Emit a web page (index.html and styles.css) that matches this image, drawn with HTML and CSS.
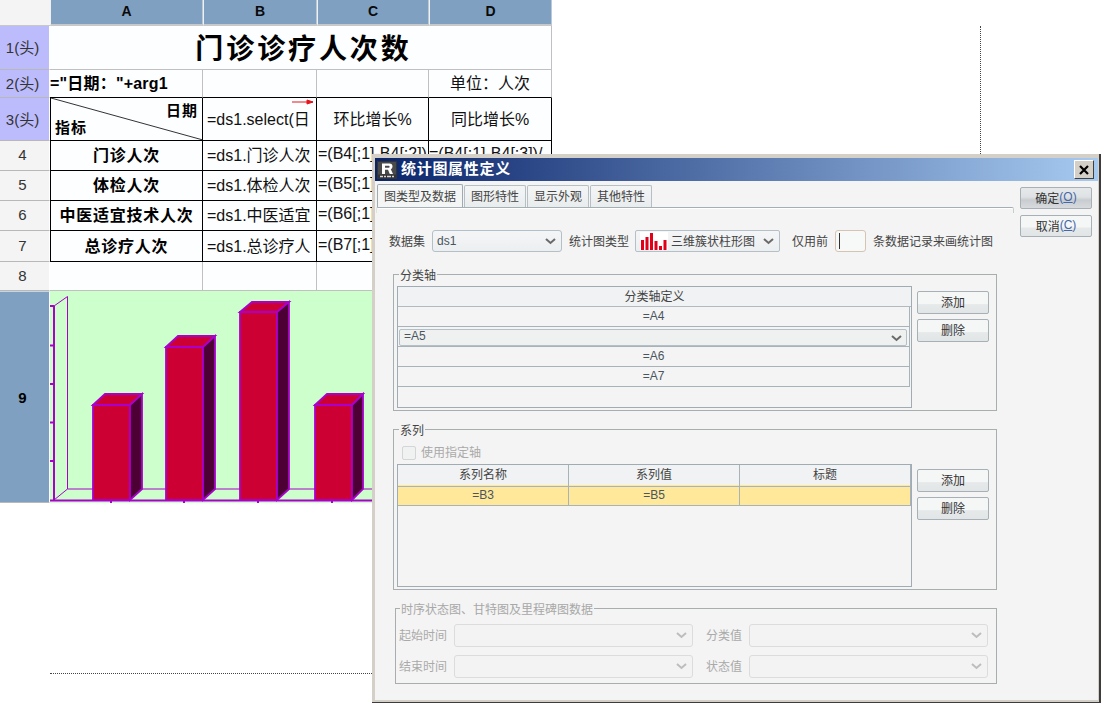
FILE: index.html
```html
<!DOCTYPE html>
<html lang="zh">
<head>
<meta charset="utf-8">
<title>统计图属性定义</title>
<link rel="stylesheet" href="styles.css">
</head>
<body>
<main class="sheet">
  <div class="corner"></div>
  <div class="col-h">A</div><div class="col-h">B</div><div class="col-h">C</div><div class="col-h">D</div>

  <div class="row-h head">1(头)</div>
  <div class="cell title">门诊诊疗人次数</div>

  <div class="row-h head">2(头)</div>
  <div class="cell gray-b black-under date-arg">="日期："+arg1</div>
  <div class="cell gray-b black-under"></div>
  <div class="cell gray-b black-under"></div>
  <div class="cell gray-b black-under center">单位：人次</div>

  <div class="row-h head">3(头)</div>
  <div class="cell black first diag">
    <svg class="diag-line" width="153" height="43" viewBox="0 0 153 43"><line x1="0" y1="0" x2="152" y2="42"></line></svg>
    <span class="diag-top">日期</span>
    <span class="diag-bottom">指标</span>
  </div>
  <div class="cell black pad arrow-cell">=ds1.select(日
    <svg class="expand-arrow" width="22" height="6" viewBox="0 0 22 6"><path d="M0 3H21"></path><path class="fill" d="M15 1L21 3L15 5Z"></path></svg>
  </div>
  <div class="cell black center">环比增长%</div>
  <div class="cell black center">同比增长%</div>

  <div class="row-h">4</div>
  <div class="cell black first center strong">门诊人次</div>
  <div class="cell black pad">=ds1.门诊人次</div>
  <div class="cell black formula">=(B4[;1]-B4[;2])</div>
  <div class="cell black">=(B4[;1]-B4[;3])/</div>

  <div class="row-h">5</div>
  <div class="cell black first center strong">体检人次</div>
  <div class="cell black pad">=ds1.体检人次</div>
  <div class="cell black formula">=(B5[;1]</div>
  <div class="cell black"></div>

  <div class="row-h">6</div>
  <div class="cell black first center strong">中医适宜技术人次</div>
  <div class="cell black pad">=ds1.中医适宜</div>
  <div class="cell black formula">=(B6[;1]</div>
  <div class="cell black"></div>

  <div class="row-h">7</div>
  <div class="cell black first center strong">总诊疗人次</div>
  <div class="cell black pad">=ds1.总诊疗人</div>
  <div class="cell black formula">=(B7[;1]</div>
  <div class="cell black"></div>

  <div class="row-h">8</div>
  <div class="cell gray-b"></div><div class="cell gray-b"></div><div class="cell gray-b"></div><div class="cell gray-b"></div>

  <div class="row-h nine">9</div>
  <div class="chart-cell">
    <svg class="chart" width="502" height="212" viewBox="0 0 502 212">
      <g class="ax-thin">
        <path d="M4 15L17.500 5.500V198H322"></path>
        <path d="M4 209L17.500 198"></path>
      </g>
      <g class="ax-thick">
        <path d="M4 15V209"></path>
        <path d="M0 209.500H322"></path>
        <path d="M0 15H4M0 54.500H4M0 93H4M0 131.500H4M0 170H4"></path>
      </g>
      <g class="ax-tick"><path d="M61 210V212M134 210V212M208 210V212M282 210V212"></path></g>
      <g class="bar">
        <rect class="front" x="43" y="114" width="37" height="95"></rect>
        <path class="top" d="M43 114L55 103H92L80 114Z"></path>
        <path class="side" d="M80 114L92 103V198L80 209Z"></path>
      </g>
      <g class="bar">
        <rect class="front" x="116" y="56" width="37" height="153"></rect>
        <path class="top" d="M116 56L128 45H165L153 56Z"></path>
        <path class="side" d="M153 56L165 45V198L153 209Z"></path>
      </g>
      <g class="bar">
        <rect class="front" x="190" y="21" width="37" height="188"></rect>
        <path class="top" d="M190 21L202 11H239L227 21Z"></path>
        <path class="side" d="M227 21L239 11V198L227 209Z"></path>
      </g>
      <g class="bar">
        <rect class="front" x="265" y="114" width="37" height="95"></rect>
        <path class="top" d="M265 114L277 103H313L302 114Z"></path>
        <path class="side" d="M302 114L313 103V198L302 209Z"></path>
      </g>
    </svg>
  </div>
</main>

<div class="page-line-v"></div>
<div class="page-line-h"></div>

<section class="dialog">
  <div class="frame">
    <header class="titlebar">
      <svg class="logo" width="20" height="18" viewBox="0 0 20 18">
        <rect width="20" height="18" fill="#333"></rect>
        <rect x="1" y="1" width="18" height="12.500" fill="#4a4a4a"></rect>
        <path class="logo-r" d="M5 2.500H12.500Q15.500 2.500 15.500 5.500Q15.500 7.500 13.800 8.200L16 13H12.800L11 8.800H8V13H5ZM8 4.700V6.800H11.800Q12.600 6.800 12.600 5.700Q12.600 4.700 11.800 4.700Z"></path>
        <path class="logo-s" d="M3 15.500H6M7 15.500H9M10 15.500H14M15 15.500H17"></path>
      </svg>
      <h1 class="dialog-title">统计图属性定义</h1>
      <button class="close" type="button">
        <svg width="12" height="12" viewBox="0 0 12 12"><path d="M2 2L10 10M10 2L2 10"></path></svg>
      </button>
    </header>
    <div class="dialog-body">
      <div class="main-col">
        <nav class="tabs">
          <span class="tab active">图类型及数据</span>
          <span class="tab">图形特性</span>
          <span class="tab">显示外观</span>
          <span class="tab">其他特性</span>
        </nav>
        <div class="tab-rule"></div>

        <div class="form-row">
          <label class="lbl-ds">数据集</label>
          <div class="sel sel-ds"><span>ds1</span><svg class="chev" width="11" height="7" viewBox="0 0 11 7"><path d="M1 1L5.500 5L10 1"></path></svg></div>
          <label class="lbl-type">统计图类型</label>
          <div class="sel sel-type">
            <svg class="mini-chart" width="28" height="18" viewBox="0 0 28 18">
              <rect width="28" height="18" fill="#fff"></rect>
              <path fill="#e0001a" d="M1 8h3v10H1zM5.500 5h3v13h-3zM10 1h3v17h-3zM14.500 9h3v9h-3zM19 14h3v4h-3zM23.500 8h3v10h-3z"></path>
            </svg>
            <span class="type-name">三维簇状柱形图</span>
            <svg class="chev" width="11" height="7" viewBox="0 0 11 7"><path d="M1 1L5.500 5L10 1"></path></svg>
          </div>
          <label class="lbl-only">仅用前</label>
          <div class="num-input"><i class="caret"></i></div>
          <label class="lbl-rest">条数据记录来画统计图</label>
        </div>

        <div class="group group-cat">
          <span class="legend">分类轴</span>
          <div class="group-flex">
            <div class="tbl tbl-cat">
              <div class="t-head">分类轴定义</div>
              <div class="t-row">=A4</div>
              <div class="t-edit"><div class="t-edit-box"><span>=A5</span><svg class="chev" width="11" height="7" viewBox="0 0 11 7"><path d="M1 1L5.500 5L10 1"></path></svg></div></div>
              <div class="t-row">=A6</div>
              <div class="t-row">=A7</div>
            </div>
            <div class="side-btns">
              <button class="btn" type="button">添加</button>
              <button class="btn" type="button">删除</button>
            </div>
          </div>
        </div>

        <div class="group group-series">
          <span class="legend">系列</span>
          <div class="check-row"><i class="check"></i><span>使用指定轴</span></div>
          <div class="group-flex">
            <div class="tbl tbl-series">
              <div class="t3 t3-head"><span>系列名称</span><span>系列值</span><span>标题</span></div>
              <div class="t3 t3-sel"><span>=B3</span><span>=B5</span><span></span></div>
            </div>
            <div class="side-btns">
              <button class="btn" type="button">添加</button>
              <button class="btn" type="button">删除</button>
            </div>
          </div>
        </div>

        <div class="group group-time">
          <span class="legend legend-off">时序状态图、甘特图及里程碑图数据</span>
          <div class="time-grid">
            <span class="t-lbl">起始时间</span>
            <div class="sel sel-off"><svg class="chev" width="11" height="7" viewBox="0 0 11 7"><path d="M1 1L5.500 5L10 1"></path></svg></div>
            <span class="t-lbl">分类值</span>
            <div class="sel sel-off"><svg class="chev" width="11" height="7" viewBox="0 0 11 7"><path d="M1 1L5.500 5L10 1"></path></svg></div>
            <span class="t-lbl">结束时间</span>
            <div class="sel sel-off"><svg class="chev" width="11" height="7" viewBox="0 0 11 7"><path d="M1 1L5.500 5L10 1"></path></svg></div>
            <span class="t-lbl">状态值</span>
            <div class="sel sel-off"><svg class="chev" width="11" height="7" viewBox="0 0 11 7"><path d="M1 1L5.500 5L10 1"></path></svg></div>
          </div>
        </div>
      </div>
      <aside class="action-col">
        <button class="btn btn-act btn-default" type="button">确定<span class="key">(<u>O</u>)</span></button>
        <button class="btn btn-act" type="button">取消<span class="key">(<u>C</u>)</span></button>
      </aside>
    </div>
  </div>
</section>
</body>
</html>
```
FILE: styles.css
```css
* { box-sizing: border-box; }
html, body { margin: 0; height: 100%; background: #fff; overflow: hidden; }
body {
  position: relative;
  width: 1109px;
  height: 713px;
  font-family: "Liberation Sans", "Noto Sans CJK SC", sans-serif;
  color: #111;
}

/* Spreadsheet */
.sheet {
  display: grid;
  width: 552px;
  grid-template-columns: 50px 153px 114px 112px 123px;
  grid-template-rows: 26px 44px 28px 43px 30px 30px 30px 31px 29px 212px;
  font-size: 16px;
}
.corner { background: #f4f4f4; border-bottom: 1px solid #c8c8c8; }
.col-h {
  display: flex; align-items: center; justify-content: center;
  background: #7fa0c0;
  border-right: 1px solid #b9c9d9;
  border-bottom: 2px solid #c8c8c8;
  border-left: 1px solid #f0f0f0;
  padding-bottom: 3px;
  font-size: 14px; font-weight: bold; color: #0a0a0a;
}
.row-h {
  display: flex; align-items: center; justify-content: center;
  background: #f4f4f4;
  border-bottom: 1px solid #b8b8b8;
  border-right: 1px solid #fff;
  font-size: 15px; color: #333;
  padding: 0 4px 2px 0;
}
.row-h.head { background: #bcbcfc; }
.row-h.nine {
  background: #7fa0c0;
  border-top: 1px solid #c8d4e0;
  color: #000; font-weight: bold;
  font-size: 15px;
  padding-bottom: 0;
}
.cell {
  position: relative;
  display: flex; align-items: center;
  overflow: hidden;
  white-space: nowrap;
  min-width: 0;
  padding-bottom: 3px;
  background: #fdfeff;
  border-right: 1px solid #000;
  border-bottom: 1px solid #000;
}
.cell.title {
  grid-column: 2 / 6;
  justify-content: center;
  font-size: 28px; font-weight: bold;
  letter-spacing: 2.900px;
  padding: 0 0 1px 6px;
  border-right: 1px solid #c0c0c0;
  border-bottom: 1px solid #c0c0c0;
  color: #000;
}
.cell.gray-b { border-right-color: #c0c0c0; border-bottom-color: #c0c0c0; }
.cell.gray-b.black-under { border-bottom-color: #000; }
.date-arg { font-weight: bold; overflow: visible; color: #000; letter-spacing: .2px; }
.cell.first { border-left: 1px solid #000; }
.center { justify-content: center; }
.strong { font-weight: bold; color: #000; letter-spacing: .75px; }
.pad { padding-left: 4px; }
.formula { padding-left: 1px; }
.diag {
  display: block;
  font-size: 15px; font-weight: bold;
  letter-spacing: 1px;
  color: #000;
}
.diag-line { position: absolute; left: 0; top: 0; }
.diag-line line { stroke: #333; stroke-width: 1; }
.diag-top { position: absolute; right: 4px; top: 1px; }
.diag-bottom { position: absolute; left: 4px; bottom: 3px; }
.expand-arrow { position: absolute; right: 2px; top: 1px; }
.expand-arrow path { stroke: #e8141c; stroke-width: 1; fill: none; }
.expand-arrow .fill { fill: #e8141c; }

/* Chart */
.chart-cell {
  grid-column: 2 / 6;
  background: #ccffcc;
  overflow: hidden;
}
.chart { display: block; }
.ax-thin path { fill: none; stroke: #aa00cc; stroke-width: 1; }
.ax-thick path { fill: none; stroke: #aa00cc; stroke-width: 2; }
.ax-tick path { fill: none; stroke: #aa00cc; stroke-width: 2; }
.bar .front, .bar .top, .bar .side { stroke: #aa00cc; stroke-width: 1.800; }
.bar .front { fill: #cc0033; }
.bar .top { fill: #cc0033; }
.bar .side { fill: #4d0033; }

/* Page break guides */
.page-line-v {
  position: absolute; left: 980px; top: 26px; height: 128px;
  border-left: 1px dotted #444;
}
.page-line-h {
  position: absolute; left: 50px; top: 673px; width: 322px;
  border-top: 1px dotted #444;
}

/* Dialog */
.dialog {
  position: absolute; left: 372px; top: 154px;
  width: 729px; height: 549px;
  border-right: 2px solid #3c3c3c;
  border-bottom: 1px solid #3c3c3c;
}
.frame {
  display: flex; flex-direction: column;
  height: 100%;
  background: #f4f4f4;
  border-top: 4px solid #d4d0c8;
  border-left: 3px solid #d4d0c8;
  border-right: 1px solid #d4d0c8;
  border-bottom: 2px solid #d4d0c8;
  font-size: 12px;
  color: #444;
}
.titlebar {
  flex: none;
  display: flex; align-items: center;
  height: 23px;
  padding: 0 4px 0 2px;
  background: linear-gradient(to right, #0a246a, #a6caf0);
}
.logo { flex: none; }
.logo-r { fill: #fff; }
.logo-s { fill: none; stroke: #d8d8d8; stroke-width: 1.500; }
.dialog-title {
  margin: 0 0 0 4px;
  font-size: 15px; font-weight: bold; color: #fff;
  letter-spacing: .7px;
  line-height: 20px;
  padding-bottom: 2px;
  flex: 1;
}
.close {
  display: flex; align-items: center; justify-content: center;
  width: 20px; height: 19px; padding: 0;
  background: #d4d0c8;
  border: 1px solid;
  border-color: #fff #404040 #404040 #fff;
}
.close path { stroke: #000; stroke-width: 2.200; fill: none; }
.dialog-body { flex: 1; display: flex; min-height: 0; }
.main-col { width: 639px; flex: none; }
.tabs { display: flex; gap: 1px; margin: 4px 0 0 2px; height: 22px; align-items: flex-end; }
.tab {
  display: flex; align-items: center; justify-content: center;
  height: 22px; width: 62px;
  padding-bottom: 2px;
  border: 1px solid #b5bfc4; border-bottom: 0;
  border-radius: 2px 2px 0 0;
  background: linear-gradient(#f4f6f6, #e9eced);
}
.tab.active { width: 86px; height: 23px; background: #f4f6f6; border-color: #9fabb1; margin-right: 0; }
.tab-rule {
  height: 6px;
  border: 1px solid #a4afb4; border-bottom: 0;
  border-left-color: #dfe3e4; border-right-color: #c6cdd0;
  border-radius: 2px 2px 0 0;
  box-shadow: inset 0 1px 0 #fff;
  margin-left: 1px;
}

.form-row { display: flex; align-items: center; height: 22px; margin-top: 17px; padding-left: 14px; }
.form-row label { padding-bottom: 2px; }
.lbl-ds { width: 43px; }
.lbl-type { margin-left: 7px; width: 66px; }
.lbl-only { margin-left: 12px; width: 43px; }
.lbl-rest { margin-left: 7px; white-space: nowrap; }
.sel {
  position: relative;
  display: flex; align-items: center;
  height: 22px;
  background: linear-gradient(#f4f5f6, #eceff0);
  border: 1px solid #b4bfc8;
  border-radius: 3px;
  color: #4a5560;
  padding: 0 0 1px 4px;
}
.sel .chev { position: absolute; right: 5px; top: 7px; }
.chev path { fill: none; stroke: #6a6a6a; stroke-width: 2; }
.sel-ds { width: 130px; }
.sel-type { width: 145px; border-radius: 2px; color: #444; }
.mini-chart { flex: none; margin-right: 3px; }
.type-name { white-space: nowrap; padding-bottom: 1px; }
.num-input {
  width: 31px; height: 22px;
  background: #f7f8f8;
  border: 1px solid #d6c3b4;
  border-radius: 3px;
  padding: 2px 0 0 3px;
}
.caret { display: block; width: 1px; height: 16px; background: #333; }

.group {
  position: relative;
  margin-left: 18px;
  width: 604px;
  border: 1px solid #a8adaf;
}
.legend {
  position: absolute; left: 5px; top: -6px;
  padding: 0 1px;
  background: #f4f4f4;
  line-height: 14px;
  color: #444;
}
.legend-off { color: #a8a8a8; left: 4px; }
.group-cat { margin-top: 22px; height: 137px; padding: 11px 0 0 3px; }
.group-series { margin-top: 18px; height: 161px; padding: 16px 0 0 3px; }
.group-time { margin: 18px 0 0 20px; width: 602px; height: 76px; padding: 15px 0 0 3px; }
.group-flex { display: flex; gap: 5px; }
.side-btns { display: flex; flex-direction: column; gap: 5px; padding-top: 5px; }
.btn {
  display: flex; align-items: center; justify-content: center;
  width: 72px; height: 23px; padding: 0 0 2px;
  font: inherit; color: #333;
  border: 1px solid #a6b0b6;
  border-radius: 2px;
  background: linear-gradient(#f5f6f6 0, #f5f6f6 55%, #e6e9ea 60%, #e2e5e6 100%);
}
.tbl { width: 515px; border: 1px solid #a0acb4; }
.tbl-cat { height: 122px; }
.tbl-series { height: 123px; }
.t-head {
  height: 20px; line-height: 20px; text-align: center;
  background: #f0f2f3;
  border-bottom: 1px solid #b0bac0;
}
.t-row {
  height: 20px; line-height: 18px; text-align: center;
  margin-right: 1px;
  border-bottom: 1px solid #a8b2b9;
  border-right: 1px solid #a8b2b9;
  color: #4a5560;
}
.t-edit {
  height: 20px; padding: 2px 2px 1px 1px;
  margin-right: 1px;
  border-bottom: 1px solid #a8b2b9;
  border-right: 1px solid #a8b2b9;
}
.t-edit-box {
  position: relative;
  height: 17px; line-height: 12px;
  padding-left: 4px;
  background: #eff1f1;
  border: 1px solid #b4bfc8;
  border-radius: 2px;
  color: #4a5560;
}
.t-edit-box .chev { position: absolute; right: 4px; top: 5px; }
.t3 { display: grid; grid-template-columns: 171px 171px 171px; height: 20px; text-align: center; }
.t3 span { line-height: 20px; border-right: 1px solid #a8b2b9; border-bottom: 1px solid #a8b2b9; }
.t3-head { background: #f0f2f3; }
.t3-head span { line-height: 21px; }
.t3-sel { background: #ffe89a; color: #4a5560; }
.check-row { display: flex; align-items: center; gap: 5px; height: 14px; margin: 0 0 4px 5px; color: #aaa; line-height: 12px; }
.check { display: block; width: 14px; height: 14px; background: #f0f1f1; border: 1px solid #d2d6d8; border-radius: 2px; }
.time-grid {
  display: grid;
  grid-template-columns: 55px 239px 56px 239px;
  grid-auto-rows: 23px;
  row-gap: 8px;
  align-items: center;
}
.t-lbl { color: #aaa; white-space: nowrap; padding-bottom: 2px; }
.t-lbl:nth-child(3), .t-lbl:nth-child(7) { padding-left: 13px; }
.sel-off {
  height: 23px;
  background: #f3f3f3;
  border-color: #dcdcdc;
}
.sel-off .chev path { stroke: #bdbdbd; }

.action-col { display: flex; flex-direction: column; gap: 6px; padding: 6px 0 0 6px; }
.btn-act { width: 72px; height: 22px; }
.btn-default { background: linear-gradient(#e6e9ea 0, #dfe2e4 45%, #c8ccd0 60%, #d8dbdd 100%); }
.key { color: #4468a8; }
.key u { text-decoration: underline; }
```
